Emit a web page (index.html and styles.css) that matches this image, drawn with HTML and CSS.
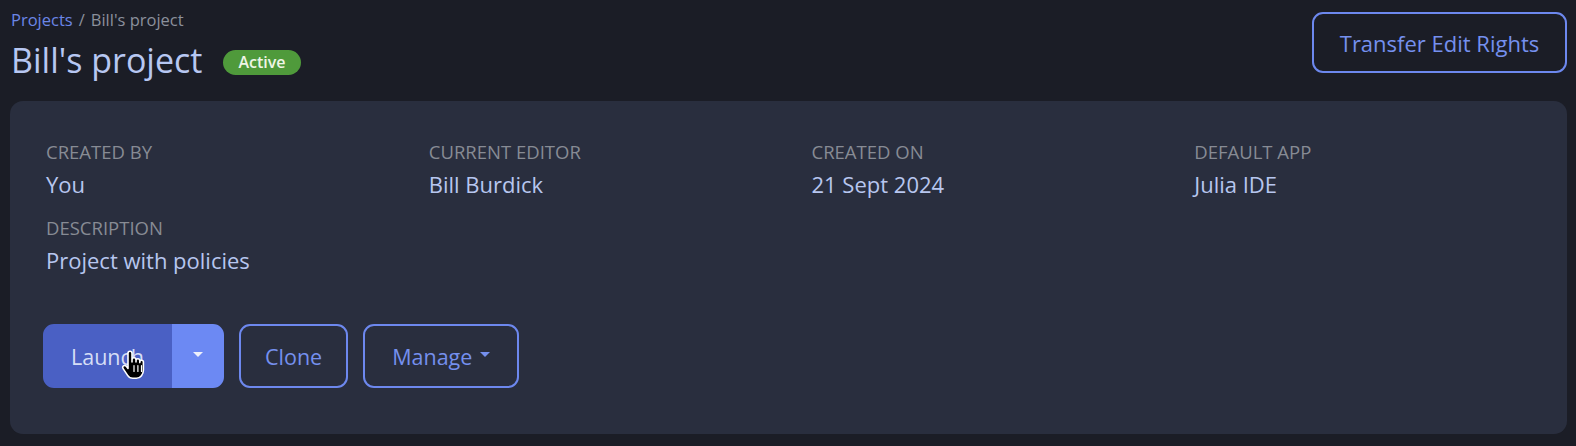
FILE: index.html
```html
<!DOCTYPE html>
<html lang="en">
<head>
<meta charset="utf-8">
<title>Bill's project</title>
<link rel="stylesheet" href="styles.css">
</head>
<body>
<div class="page">
  <header class="header">
    <div class="header-left">
      <nav class="breadcrumb">
        <a class="crumb-link" href="#">Projects</a>
        <span class="crumb-sep">/</span>
        <span class="crumb-current">Bill's project</span>
      </nav>
      <div class="title-row">
        <h1 class="title">Bill's project</h1>
        <span class="badge">Active</span>
      </div>
    </div>
    <button class="btn btn-outline btn-transfer">Transfer Edit Rights</button>
  </header>

  <section class="card">
    <div class="info-grid">
      <div class="field">
        <div class="label">CREATED BY</div>
        <div class="value">You</div>
      </div>
      <div class="field">
        <div class="label">CURRENT EDITOR</div>
        <div class="value">Bill Burdick</div>
      </div>
      <div class="field">
        <div class="label">CREATED ON</div>
        <div class="value">21 Sept 2024</div>
      </div>
      <div class="field">
        <div class="label">DEFAULT APP</div>
        <div class="value">Julia IDE</div>
      </div>
      <div class="field">
        <div class="label">DESCRIPTION</div>
        <div class="value">Project with policies</div>
      </div>
    </div>

    <div class="actions">
      <div class="split">
        <button class="btn btn-primary btn-main">Launch</button>
        <button class="btn btn-primary-light btn-toggle"><span class="caret"></span></button>
        <svg class="cursor" width="28" height="32" viewBox="0 0 28 32" aria-hidden="true">
          <path d="M10 2.2c1.1 0 2 .9 2 2V13v-2.2c0-1.1.9-2 2-2s2 .9 2 2V13v-1.3c0-1 .9-1.9 1.9-1.9s1.9.9 1.9 1.9V13.6v-.6c0-1 .8-1.8 1.8-1.8s1.8.8 1.8 1.8V21c0 4-2.8 8.3-7 8.3h-3.6c-2.3 0-4-1.1-5.2-2.9L3.1 19.6c-.7-.9-.5-2.2.4-2.8.9-.6 2.1-.4 2.8.5L8 19.4V4.2c0-1.1.9-2 2-2z" fill="#000" stroke="#fff" stroke-width="1.6" stroke-linejoin="round"/>
          <path d="M14 16.5v6M17.9 16.5v6M21.5 16.5v6" stroke="#fff" stroke-width="1.2" stroke-linecap="round"/>
        </svg>
      </div>
      <button class="btn btn-outline">Clone</button>
      <button class="btn btn-outline btn-manage">Manage <span class="caret caret-blue"></span></button>
    </div>
  </section>
</div>
</body>
</html>
```

FILE: styles.css
```css
* {
  box-sizing: border-box;
}

html, body {
  margin: 0;
  padding: 0;
  background: #1b1d26;
}

body {
  font-family: "Open Sans", "DejaVu Sans", sans-serif;
  color: #b7c6ef;
}

.page {
  padding: 8px 9px 0 10px;
}

.header {
  display: flex;
  justify-content: space-between;
  align-items: flex-start;
}

.header-left {
  padding-left: 1px;
}

.breadcrumb {
  font-size: 16.5px;
  line-height: 24px;
  color: #8b909c;
  display: flex;
  gap: 6px;
}

.crumb-link {
  color: #6b86e6;
  text-decoration: none;
}

.title-row {
  display: flex;
  align-items: center;
  gap: 21px;
  margin-top: 6px;
}

.title {
  margin: 0;
  font-size: 34px;
  line-height: 44px;
  font-weight: 400;
  color: #b7c7f2;
}

.badge {
  display: inline-flex;
  align-items: center;
  height: 25px;
  padding: 0 15px;
  border-radius: 13px;
  background: #4f9a3b;
  color: #eef5e6;
  font-size: 16px;
  font-weight: 600;
  margin-top: 4px;
}

.btn {
  font-family: inherit;
  font-size: 21.5px;
  height: 64px;
  border-radius: 11px;
  border: 2px solid transparent;
  padding: 0 24px;
  cursor: pointer;
  display: inline-flex;
  align-items: center;
  justify-content: center;
}

.btn-outline {
  background: transparent;
  border-color: #6d88ee;
  color: #7590ee;
}

.btn-transfer {
  height: 61px;
  width: 255px;
  margin-top: 4px;
  font-size: 22px;
}

.btn-manage {
  padding: 0 27px;
}

.card {
  margin-top: 19px;
  background: #292e3e;
  border-radius: 13px;
  padding: 38px 0 46px 36px;
}

.info-grid {
  display: grid;
  grid-template-columns: repeat(4, 1fr);
  row-gap: 16px;
  margin-right: -10px;
}

.label {
  font-size: 18.5px;
  line-height: 26px;
  color: #878b94;
}

.value {
  margin-top: 4px;
  font-size: 22px;
  line-height: 30px;
  color: #b7c6ef;
}

.actions {
  display: flex;
  gap: 15px;
  margin-top: 49px;
  margin-left: -3px;
}

.split {
  position: relative;
  display: flex;
}

.btn-primary {
  background: #4a60c4;
  border-color: #4a60c4;
  color: #d6def6;
  border-radius: 11px 0 0 11px;
  width: 129px;
  padding: 0;
}

.btn-primary-light {
  background: #6c89f3;
  border-color: #6c89f3;
  border-radius: 0 11px 11px 0;
  width: 52px;
  padding: 0;
}

.caret {
  display: inline-block;
  width: 0;
  height: 0;
  border-left: 5px solid transparent;
  border-right: 5px solid transparent;
  border-top: 5px solid #eef1fb;
  margin-bottom: 4px;
}

.caret-blue {
  border-top-color: #7590ee;
  margin-left: 8px;
}

.cursor {
  position: absolute;
  left: 77px;
  top: 25px;
}
```
